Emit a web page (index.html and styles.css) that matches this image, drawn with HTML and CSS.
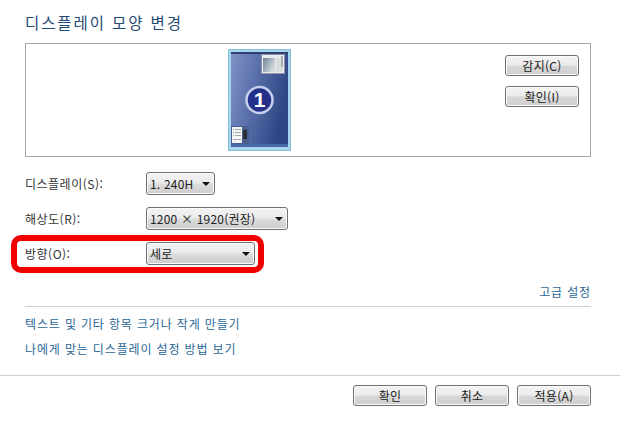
FILE: index.html
```html
<!DOCTYPE html>
<html lang="ko">
<head>
<meta charset="utf-8">
<title>디스플레이 모양 변경</title>
<link rel="stylesheet" href="styles.css">
</head>
<body>
<main class="content">
  <h1 class="title">디스플레이 모양 변경</h1>
  <section class="preview">
    <svg class="monitor" width="63" height="102" viewBox="0 0 63 102">
      <defs>
        <linearGradient id="desk" x1="0" y1="0" x2="1" y2="0.35">
          <stop offset="0" stop-color="#8094c6"/>
          <stop offset="0.55" stop-color="#5369a6"/>
          <stop offset="1" stop-color="#2f4684"/>
        </linearGradient>
        <linearGradient id="win" x1="0" y1="0" x2="1" y2="0.6">
          <stop offset="0" stop-color="#6f8193"/>
          <stop offset="1" stop-color="#d5dcdf"/>
        </linearGradient>
      </defs>
      <rect x="0" y="0" width="63" height="102" fill="#86bfe2"/>
      <rect x="1" y="1" width="61" height="100" fill="#a8d4ec"/>
      <rect x="3" y="3" width="57" height="95" fill="url(#desk)"/>
      <rect x="3" y="3" width="57" height="2" fill="#2f4170"/>
      <rect x="3" y="95" width="57" height="3" fill="#4a6aa6"/>
      <rect x="33" y="5" width="24" height="20" fill="#8d94a8"/>
      <rect x="34" y="6" width="22" height="18" fill="#e9ecec"/>
      <rect x="35" y="9" width="12" height="14" fill="url(#win)"/>
      <rect x="48" y="9" width="7" height="14" fill="#d8dcdc"/>
      <rect x="53" y="7" width="2" height="11" fill="#a8aeb4"/>
      <rect x="3" y="77" width="18" height="18" fill="#4a5f8f"/>
      <rect x="4" y="78" width="10" height="16" fill="#f4f6f6"/>
      <path d="M5 80h1v1H5zM5 83h1v1H5zM5 86h1v1H5zM7 80h6v1H7zM7 83h6v1H7zM7 86h6v1H7zM5 90h8v1H5z" fill="#a4a9b0"/>
      <rect x="15" y="81" width="4" height="9" fill="#2c2f38"/>
      <circle cx="31.5" cy="51" r="13" fill="#24308a" stroke="#c9d0ec" stroke-width="2.5"/>
      <text class="monitor-num" x="31.5" y="58">1</text>
    </svg>
    <div class="preview-actions">
      <button class="btn" type="button">감지(C)</button>
      <button class="btn" type="button">확인(I)</button>
    </div>
  </section>
  <form class="fields">
    <div class="field">
      <span class="field-label">디스플레이(S):</span>
      <div class="select select-display"><span>1. 240H</span><i class="caret"></i></div>
    </div>
    <div class="field">
      <span class="field-label">해상도(R):</span>
      <div class="select select-res"><span>1200 × 1920(권장)</span><i class="caret"></i></div>
    </div>
    <div class="field field-marked">
      <span class="field-label">방향(O):</span>
      <div class="select select-orient"><span>세로</span><i class="caret"></i></div>
      <div class="highlight"></div>
    </div>
  </form>
  <div class="advanced"><a class="link" href="#">고급 설정</a></div>
  <hr class="rule">
  <p class="link-row"><a class="link" href="#">텍스트 및 기타 항목 크거나 작게 만들기</a></p>
  <p class="link-row link-row-second"><a class="link" href="#">나에게 맞는 디스플레이 설정 방법 보기</a></p>
</main>
<footer class="footer">
  <button class="btn" type="button">확인</button>
  <button class="btn" type="button">취소</button>
  <button class="btn" type="button">적용(A)</button>
</footer>
</body>
</html>
```
FILE: styles.css
```css
* { box-sizing: border-box; }
html, body { margin: 0; padding: 0; }
body {
  width: 620px;
  height: 425px;
  overflow: hidden;
  background: #fff;
  color: #222;
  font-family: "Noto Sans CJK KR", "Liberation Sans", sans-serif;
  font-size: 12px;
}
.content { padding: 0 29px 0 25px; height: 375px; }
.title {
  margin: 0;
  padding-top: 12px;
  height: 43px;
  font-size: 15.5px;
  line-height: 20px;
  font-weight: 400;
  letter-spacing: 1.9px;
  color: #1f4a74;
}
.preview {
  display: flex;
  justify-content: space-between;
  height: 114px;
  border: 1px solid #a5a5a5;
  padding: 5px 11px 0 202px;
}
.monitor { display: block; }
.monitor-num {
  font-family: "Liberation Sans", sans-serif;
  font-size: 21px;
  font-weight: 700;
  fill: #fff;
  text-anchor: middle;
}
.preview-actions {
  display: flex;
  flex-direction: column;
  gap: 10px;
  padding-top: 6px;
}
.btn {
  width: 74px;
  height: 21px;
  padding: 0;
  border: 1px solid #707070;
  border-radius: 3px;
  background: linear-gradient(#f4f4f4 0%, #ebebeb 48%, #d8d8d8 52%, #cfcfcf 100%);
  box-shadow: inset 0 0 0 1px #fbfbfb;
  color: #1a1a1a;
  font: inherit;
  line-height: 17px;
  letter-spacing: 0.3px;
}
.fields { padding-top: 15px; height: 121px; }
.field {
  position: relative;
  display: flex;
  align-items: center;
  height: 23px;
  margin-bottom: 12px;
}
.field-label { width: 121px; color: #333; letter-spacing: 0.5px; }
.select {
  display: flex;
  align-items: center;
  justify-content: space-between;
  height: 23px;
  padding: 0 4px 0 3px;
  border: 1px solid #707070;
  border-radius: 3px;
  background: linear-gradient(#f3f3f3 0%, #ebebeb 48%, #dcdcdc 52%, #cdcdcd 100%);
  box-shadow: inset 0 0 0 1px #fafafa;
  letter-spacing: 0.2px;
}
.select-display { width: 69px; }
.select-res { width: 142px; }
.select-orient { width: 109px; }
.caret {
  width: 0;
  height: 0;
  border-left: 4px solid transparent;
  border-right: 4px solid transparent;
  border-top: 4px solid #111;
}
.highlight {
  position: absolute;
  left: -14px;
  top: -7px;
  width: 253px;
  height: 38px;
  border: 6px solid #f00000;
  border-radius: 10px;
}
.advanced { display: flex; justify-content: flex-end; height: 28px; line-height: 17px; padding-top: 5px; }
.rule { margin: 0; border: 0; border-top: 1px solid #cfcfcf; }
.link { color: #2a6796; text-decoration: none; letter-spacing: 0.85px; }
.link-row { margin: 0; padding-top: 8px; line-height: 17px; height: 26px; }
.link-row-second { padding-top: 7px; height: 25px; }
.footer {
  display: flex;
  justify-content: flex-end;
  gap: 8px;
  height: 50px;
  padding: 9px 29px 0 0;
  border-top: 1px solid #cfcfcf;
}
```
